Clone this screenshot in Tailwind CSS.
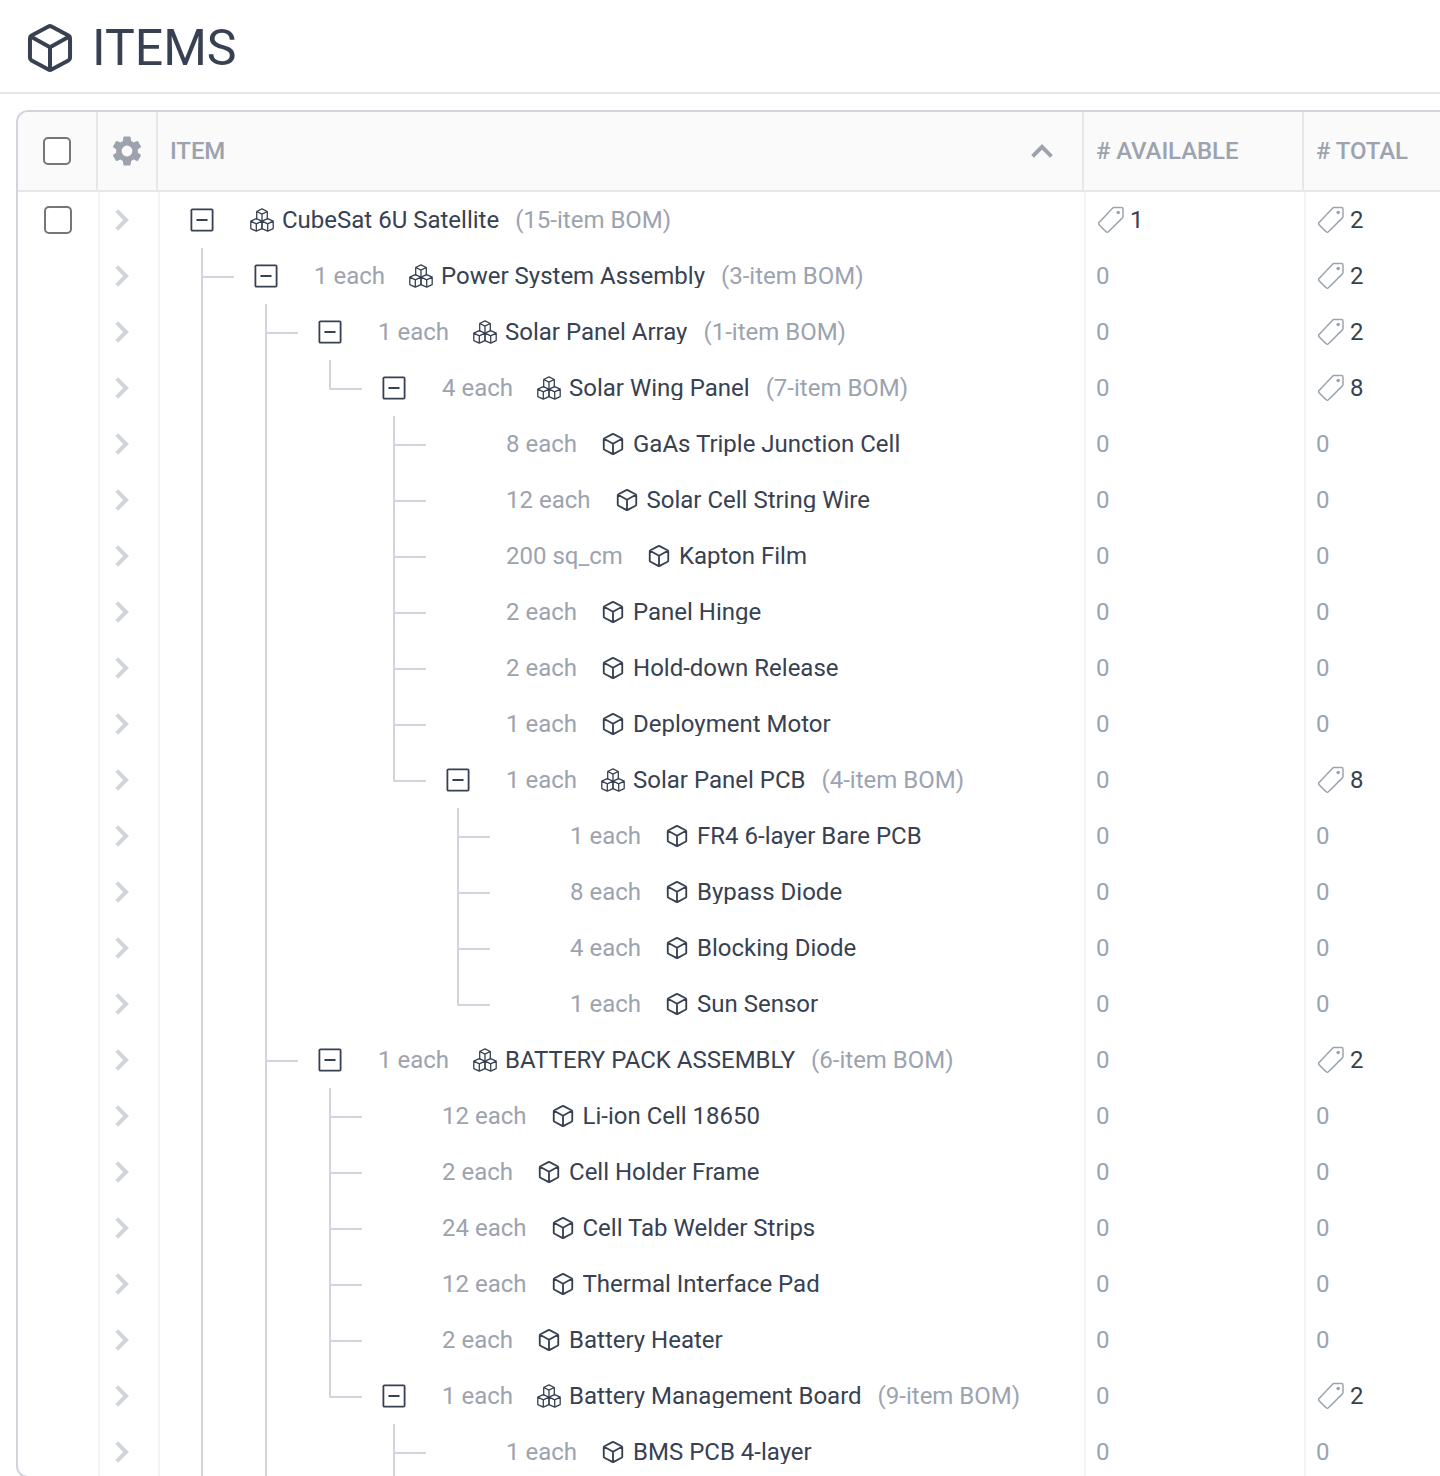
<!DOCTYPE html>
<html lang="en">
<head>
<meta charset="UTF-8">
<title>Items</title>
<meta name="viewport" content="width=device-width,initial-scale=1">
<script src="https://cdn.jsdelivr.net/npm/@tailwindcss/browser@4"></script>
</head>
<body class="bg-white font-[Roboto,sans-serif] text-[24px] text-[#374151] h-[1476px] overflow-hidden">

<!-- icons -->
<svg class="hidden">
  <symbol id="i-cube" viewBox="0 0 24 24">
    <path d="M11.3 2.1a1.4 1.4 0 0 1 1.4 0l7.8 4.1a1.4 1.4 0 0 1 .75 1.25v9.1a1.4 1.4 0 0 1-.75 1.25l-7.8 4.1a1.4 1.4 0 0 1-1.4 0l-7.8-4.1a1.4 1.4 0 0 1-.75-1.25V7.45a1.4 1.4 0 0 1 .75-1.25zM3.1 6.7 12 11.7l8.9-5M12 11.7V22" fill="none" stroke="currentColor" stroke-width="1.85" stroke-linejoin="round"/>
  </symbol>
  <symbol id="i-cubes" viewBox="0 0 24 24">
    <g fill="none" stroke="currentColor" stroke-width="1.3" stroke-linejoin="round">
      <path d="M6.7 11.4V3.5L12 .9l5.3 2.6v7.9M6.7 3.5 12 6.2l5.3-2.7M12 6.2v6.9"/>
      <path d="M6.3 10.6 12 13.1V20.6L6.3 23.2.8 20.6V13.1zM.8 13.1l5.5 2.7 5.7-2.7M6.3 15.8v7.4"/>
      <path d="M17.7 10.6 23.2 13.1V20.6L17.7 23.2 12 20.6V13.1zM12 13.1l5.7 2.7 5.5-2.7M17.7 15.8v7.4"/>
    </g>
  </symbol>
  <symbol id="i-tag" viewBox="0 0 28 28">
    <path d="M16.9 1.6h7.5a1.6 1.6 0 0 1 1.6 1.6v7.3a2 2 0 0 1-.6 1.4L11.4 25.7a1.6 1.6 0 0 1-2.3 0L2.1 18.7a1.6 1.6 0 0 1 0-2.3L15.5 2.2a2 2 0 0 1 1.4-.6z" fill="none" stroke="currentColor" stroke-width="1.5"/>
    <circle cx="21.2" cy="6.5" r="1.8" fill="currentColor"/>
  </symbol>
  <symbol id="i-gear" viewBox="0 0 24 24">
    <path fill="currentColor" d="M19.14 12.94c.04-.3.06-.61.06-.94s-.02-.64-.07-.94l2.03-1.58a.49.49 0 0 0 .12-.61l-1.92-3.32a.49.49 0 0 0-.59-.22l-2.39.96a7 7 0 0 0-1.62-.94l-.36-2.54a.48.48 0 0 0-.48-.41h-3.84a.48.48 0 0 0-.47.41l-.36 2.54c-.59.24-1.13.57-1.62.94l-2.39-.96a.48.48 0 0 0-.59.22L2.74 8.87a.47.47 0 0 0 .12.61l2.03 1.58c-.05.3-.09.63-.09.94s.02.64.07.94l-2.03 1.58a.49.49 0 0 0-.12.61l1.92 3.32c.12.22.37.29.59.22l2.39-.96c.5.38 1.03.7 1.62.94l.36 2.54c.05.24.24.41.48.41h3.84c.24 0 .44-.17.47-.41l.36-2.54a6.8 6.8 0 0 0 1.62-.94l2.39.96c.22.08.47 0 .59-.22l1.92-3.32a.47.47 0 0 0-.12-.61zM12 15.6a3.6 3.6 0 1 1 0-7.2 3.6 3.6 0 0 1 0 7.2z"/>
  </symbol>
</svg>

<header class="flex items-center h-[94px] border-b-2 border-[#e2e5ea] pl-[24px] pt-[4px]">
  <svg class="size-[52px]"><use href="#i-cube"/></svg>
  <h1 class="ml-[16px] text-[50px] leading-none">ITEMS</h1>
</header>

<main class="mt-[16px] ml-[16px] h-[1368px] border-2 border-r-0 border-[#d1d5db] rounded-l-[12px] overflow-hidden">
  <div class="flex items-center h-[80px] bg-[#fafafa] border-b-2 border-[#e5e7eb] font-medium tracking-[-0.1px] text-[#9ca3af]">
    <div class="shrink-0 w-[80px] h-full border-r-2 border-[#e5e7eb] flex items-center justify-center">
      <span class="size-[28px] bg-white border-2 border-[#767676] rounded-[5px]"></span>
    </div>
    <div class="shrink-0 w-[60px] h-full border-r-2 border-[#e5e7eb] flex items-center justify-center">
      <svg class="size-[36px]"><use href="#i-gear"/></svg>
    </div>
    <div class="shrink-0 w-[926px] h-full border-r-2 border-[#e5e7eb] flex items-center justify-between pl-[12px] pr-[29px]">
      <span>ITEM</span>
      <svg class="w-[22px] h-[14px]" viewBox="0 0 22 14"><path d="M1.6 12.3 11 2.9l9.4 9.4" fill="none" stroke="currentColor" stroke-width="4"/></svg>
    </div>
    <div class="shrink-0 w-[220px] h-full border-r-2 border-[#e5e7eb] flex items-center pl-[12px]"># AVAILABLE</div>
    <div class="flex items-center pl-[12px] whitespace-nowrap"># TOTAL</div>
  </div>
  <div id="rows"></div>
</main>

<script>
// guides: "|" passes through, "T" branch, "L" last branch, "." empty
// [guides, qty, name, bom size, available, total]
const items=[
  ['','','CubeSat 6U Satellite',15,1,2],
  ['T','1 each','Power System Assembly',3,0,2],
  ['|T','1 each','Solar Panel Array',1,0,2],
  ['||L','4 each','Solar Wing Panel',7,0,8],
  ['||.T','8 each','GaAs Triple Junction Cell',0,0,0],
  ['||.T','12 each','Solar Cell String Wire',0,0,0],
  ['||.T','200 sq_cm','Kapton Film',0,0,0],
  ['||.T','2 each','Panel Hinge',0,0,0],
  ['||.T','2 each','Hold-down Release',0,0,0],
  ['||.T','1 each','Deployment Motor',0,0,0],
  ['||.L','1 each','Solar Panel PCB',4,0,8],
  ['||..T','1 each','FR4 6-layer Bare PCB',0,0,0],
  ['||..T','8 each','Bypass Diode',0,0,0],
  ['||..T','4 each','Blocking Diode',0,0,0],
  ['||..L','1 each','Sun Sensor',0,0,0],
  ['|T','1 each','BATTERY PACK ASSEMBLY',6,0,2],
  ['||T','12 each','Li-ion Cell 18650',0,0,0],
  ['||T','2 each','Cell Holder Frame',0,0,0],
  ['||T','24 each','Cell Tab Welder Strips',0,0,0],
  ['||T','12 each','Thermal Interface Pad',0,0,0],
  ['||T','2 each','Battery Heater',0,0,0],
  ['||L','1 each','Battery Management Board',9,0,2],
  ['||.T','1 each','BMS PCB 4-layer',0,0,0]
];

const guide={
  '|':'<div class="w-[64px] pl-[31px]"><div class="h-full border-l-2 border-[#d1d5db]"></div></div>',
  'T':'<div class="w-[64px] pl-[31px]"><div class="h-full border-l-2 border-[#d1d5db] pt-[28px]"><div class="w-[31px] h-[2px] bg-[#d1d5db]"></div></div></div>',
  'L':'<div class="w-[64px] pl-[31px]"><div class="w-[33px] h-[30px] border-l-2 border-b-2 border-[#d1d5db] rounded-bl-[2px]"></div></div>',
  '.':'<div class="w-[64px]"></div>'
};

const toggle='<svg class="size-[24px]" viewBox="0 0 24 24"><path d="M2.4 1.4h19.2a1 1 0 0 1 1 1v19.2a1 1 0 0 1-1 1H2.4a1 1 0 0 1-1-1V2.4a1 1 0 0 1 1-1zM6.5 12h11" fill="none" stroke="currentColor" stroke-width="1.8"/></svg>';

function count(n){
  return n ? `<svg class="size-[28px] ml-px text-[#9ca3af]"><use href="#i-tag"/></svg><span class="ml-[5px]">${n}</span>`
           : '<span class="text-[#9ca3af]">0</span>';
}

document.getElementById('rows').innerHTML=items.map(([g,qty,name,bom,avail,total],i)=>`
  <div class="flex h-[56px]">
    <div class="shrink-0 w-[82px] border-r-2 border-[#f3f4f6] flex items-center pl-[26px]">
      ${i ? '' : '<span class="size-[28px] bg-white border-2 border-[#767676] rounded-[5px]"></span>'}
    </div>
    <div class="shrink-0 w-[60px] border-r-2 border-[#f3f4f6] flex items-center pl-[15px] text-[#d1d5db]">
      <svg class="w-[14px] h-[22px]" viewBox="0 0 14 22"><path d="M1.7 1.6 11.1 11l-9.4 9.4" fill="none" stroke="currentColor" stroke-width="4"/></svg>
    </div>
    <div class="shrink-0 w-[926px] border-r-2 border-[#f3f4f6] flex pl-[10px] whitespace-nowrap">
      ${[...g].map(c=>guide[c]).join('')}
      <div class="w-[80px] pl-[20px] flex items-center">${bom ? toggle : ''}</div>
      <div class="flex items-center">
        ${qty ? `<span class="text-[#9ca3af] mr-[24px]">${qty}</span>` : ''}
        <svg class="size-[24px]"><use href="${bom ? '#i-cubes' : '#i-cube'}"/></svg>
        <span class="ml-[8px] h-[24px] leading-[24px] overflow-hidden">${name}</span>
        ${bom ? `<span class="text-[#9ca3af] ml-[16px]">(${bom}-item BOM)</span>` : ''}
      </div>
    </div>
    <div class="shrink-0 w-[220px] border-r-2 border-[#f3f4f6] flex items-center pl-[10px]">${count(avail)}</div>
    <div class="flex items-center pl-[10px]">${count(total)}</div>
  </div>`).join('');
</script>
</body>
</html>
